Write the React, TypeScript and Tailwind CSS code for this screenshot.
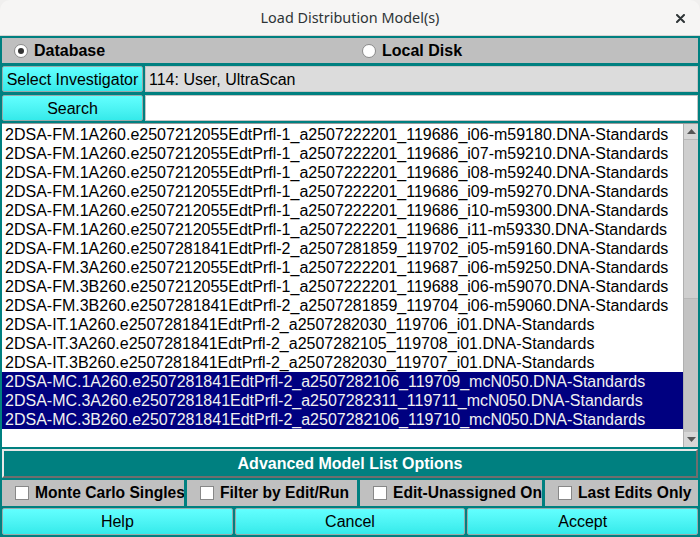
import React from 'react';

const models = [
  '2DSA-FM.1A260.e2507212055EdtPrfl-1_a2507222201_119686_i06-m59180.DNA-Standards',
  '2DSA-FM.1A260.e2507212055EdtPrfl-1_a2507222201_119686_i07-m59210.DNA-Standards',
  '2DSA-FM.1A260.e2507212055EdtPrfl-1_a2507222201_119686_i08-m59240.DNA-Standards',
  '2DSA-FM.1A260.e2507212055EdtPrfl-1_a2507222201_119686_i09-m59270.DNA-Standards',
  '2DSA-FM.1A260.e2507212055EdtPrfl-1_a2507222201_119686_i10-m59300.DNA-Standards',
  '2DSA-FM.1A260.e2507212055EdtPrfl-1_a2507222201_119686_i11-m59330.DNA-Standards',
  '2DSA-FM.1A260.e2507281841EdtPrfl-2_a2507281859_119702_i05-m59160.DNA-Standards',
  '2DSA-FM.3A260.e2507212055EdtPrfl-1_a2507222201_119687_i06-m59250.DNA-Standards',
  '2DSA-FM.3B260.e2507212055EdtPrfl-1_a2507222201_119688_i06-m59070.DNA-Standards',
  '2DSA-FM.3B260.e2507281841EdtPrfl-2_a2507281859_119704_i06-m59060.DNA-Standards',
  '2DSA-IT.1A260.e2507281841EdtPrfl-2_a2507282030_119706_i01.DNA-Standards',
  '2DSA-IT.3A260.e2507281841EdtPrfl-2_a2507282105_119708_i01.DNA-Standards',
  '2DSA-IT.3B260.e2507281841EdtPrfl-2_a2507282030_119707_i01.DNA-Standards',
  '2DSA-MC.1A260.e2507281841EdtPrfl-2_a2507282106_119709_mcN050.DNA-Standards',
  '2DSA-MC.3A260.e2507281841EdtPrfl-2_a2507282311_119711_mcN050.DNA-Standards',
  '2DSA-MC.3B260.e2507281841EdtPrfl-2_a2507282106_119710_mcN050.DNA-Standards',
];

const selected = [13, 14, 15];

// widths follow the reference; long labels get clipped like the original dialog
const checks = [
  { label: 'Monte Carlo Singles', w: 'w-[182px]' },
  { label: 'Filter by Edit/Run', w: 'w-[170px]' },
  { label: 'Edit-Unassigned Only', w: 'w-[182px]' },
  { label: 'Last Edits Only', w: 'flex-1' },
];

function CyanButton({ label, className = '' }: { label: string; className?: string }) {
  return (
    <button className={`bg-gradient-to-b from-[#62ffff] to-[#34eaea] border border-[#9aa] rounded-[2px] text-[16px] text-black ${className}`}>
      {label}
    </button>
  );
}

function Radio({ checked }: { checked?: boolean }) {
  return (
    <span className="w-[14px] h-[14px] rounded-full bg-white border border-[#8a8a8a] flex items-center justify-center">
      {checked && <span className="w-[6px] h-[6px] rounded-full bg-[#333]" />}
    </span>
  );
}

export default function App() {
  return (
    <div className="w-[700px] h-[537px] overflow-hidden bg-[#f0efee] font-['Liberation_Sans',Arial,sans-serif]">
      {/* title bar */}
      <div className="h-[36px] bg-[#f6f5f4] border-b border-[#d6d4d2] rounded-t-[10px] flex items-center justify-center relative">
        <span className="text-[14.4px] text-[#2e3436] font-['Noto_Sans',sans-serif]">Load Distribution Model(s)</span>
        <svg className="absolute right-[15px] top-[14px]" width="9" height="9" viewBox="0 0 9 9">
          <path d="M1 1 L8 8 M8 1 L1 8" stroke="#2e3436" strokeWidth="2" strokeLinecap="round" />
        </svg>
      </div>

      <div className="h-[501px] bg-[#008080] px-[2px] pt-[2px] flex flex-col">
        {/* source */}
        <div className="h-[25px] pt-[1px] bg-[#bfbfbf] flex text-[16px] font-bold text-black">
          <div className="w-1/2 flex items-center gap-[6px] pl-[12px]">
            <Radio checked />
            <span>Database</span>
          </div>
          <div className="w-1/2 flex items-center gap-[6px] pl-[12px]">
            <Radio />
            <span>Local Disk</span>
          </div>
        </div>

        <div className="mt-[3px] h-[26px] flex gap-[2px]">
          <CyanButton label="Select Investigator" className="w-[141px] pt-[1px]" />
          <div className="flex-1 bg-[#dcdcdc] border border-[#c4c4c4] flex items-center pl-[3px] pt-[1px] text-[16px] text-black">114: User, UltraScan</div>
        </div>

        <div className="mt-[3px] h-[26px] flex gap-[2px]">
          <CyanButton label="Search" className="w-[141px] pt-[1px]" />
          <div className="flex-1 bg-white border border-[#c4c4c4]" />
        </div>

        {/* model list */}
        <div className="mt-[2px] h-[324px] bg-white border-t border-[#9a9a9a] flex">
          <div className="flex-1 pt-[1px] overflow-hidden">
            {models.map((m, i) => (
              <div
                key={m}
                className={`h-[19px] leading-[19px] pl-[3px] text-[16px] whitespace-nowrap ${
                  selected.includes(i) ? 'bg-[#000080] text-[#f0f0f0]' : 'text-black'
                }`}
              >
                {m}
              </div>
            ))}
          </div>
          <div className="w-[15px] bg-[#c3c3c3] border-l border-[#b0b0b0] flex flex-col">
            <div className="h-[15px] bg-[#d6d6d6] flex items-center justify-center">
              <svg width="9" height="5" viewBox="0 0 9 5"><path d="M0 5 L4.5 0 L9 5 Z" fill="#555" /></svg>
            </div>
            <div className="h-[160px] bg-[#cfcfcf] border-y border-[#b8b8b8]" />
            <div className="flex-1" />
            <div className="h-[15px] bg-[#d6d6d6] flex items-center justify-center">
              <svg width="9" height="5" viewBox="0 0 9 5"><path d="M0 0 L4.5 5 L9 0 Z" fill="#555" /></svg>
            </div>
          </div>
        </div>

        {/* advanced */}
        <div className="mt-[2px] h-[29px] pt-[1px] bg-[#008080] border-2 border-t-[#e8e8e8] border-l-[#e8e8e8] border-b-[#6e6e6e] border-r-[#6e6e6e] flex items-center justify-center text-white font-bold text-[16px]">
          Advanced Model List Options
        </div>

        <div className="mt-[2px] h-[26px] flex gap-[3px]">
          {checks.map(c => (
            <div key={c.label} className={`${c.w} bg-[#c0c0c0] flex items-center pl-[13px] gap-[6px] overflow-hidden whitespace-nowrap text-[15.6px] font-bold text-black`}>
              <span className="w-[14px] h-[14px] shrink-0 bg-white border border-[#888]" />
              <span>{c.label}</span>
            </div>
          ))}
        </div>

        <div className="mt-[2px] h-[27px] flex gap-[2px]">
          <CyanButton label="Help" className="flex-1" />
          <CyanButton label="Cancel" className="flex-1" />
          <CyanButton label="Accept" className="flex-1" />
        </div>
      </div>
    </div>
  );
}
